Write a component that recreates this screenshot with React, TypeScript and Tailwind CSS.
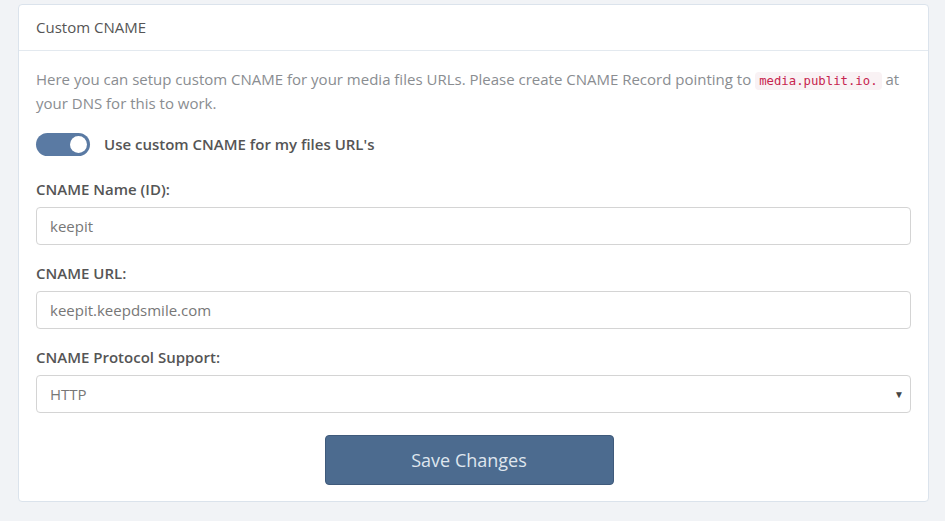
import { useState } from "react"

export default function App() {
  const [on, setOn] = useState(true)

  return (
    <div className="min-h-[521px] bg-[#f1f3f6] px-[18px] pt-[4px] pb-[18px] font-['Open_Sans',sans-serif] text-[15px]">
      <div className="w-[911px] rounded-[4px] border border-[#dbe3ec] bg-white">
        <div className="flex h-[46px] items-center border-b border-[#e3e9ef] px-[17px] text-[15px] text-[#555]">
          Custom CNAME
        </div>
        <div className="px-[17px] pt-[16px] pb-[16px]">
          <p className="h-[48px] leading-[24px] text-[#8a8d91]">
            Here you can setup custom CNAME for your media files URLs. Please create CNAME Record pointing to{" "}
            <code className="rounded-[4px] bg-[#f9f2f4] px-[4px] py-[2px] font-['DejaVu_Sans_Mono',monospace] text-[12.3px] leading-none text-[#c7254e]">
              media.publit.io.
            </code>{" "}
            at your DNS for this to work.
          </p>

          <label className="mt-[18px] flex h-[23px] cursor-pointer items-center gap-[14px]">
            <button
              type="button"
              onClick={() => setOn(!on)}
              className={`relative h-[23px] w-[54px] rounded-full ${on ? "bg-[#5a7aa3]" : "bg-[#ccc]"}`}
            >
              <span
                className={`absolute top-[3px] h-[17px] w-[17px] rounded-full bg-white ${on ? "left-[34px]" : "left-[3px]"}`}
              />
            </button>
            <span className="font-semibold leading-[23px] text-[#555]">Use custom CNAME for my files URL's</span>
          </label>

          <div className="mt-[23px]">
            <div className="mb-[8px] font-semibold leading-[20px] text-[#555]">CNAME Name (ID):</div>
            <input
              defaultValue="keepit"
              className="block h-[38px] w-full rounded-[4px] border border-[#d4d4d4] px-[13px] text-[#777] outline-none"
            />
          </div>

          <div className="mt-[18px]">
            <div className="mb-[8px] font-semibold leading-[20px] text-[#555]">CNAME URL:</div>
            <input
              defaultValue="keepit.keepdsmile.com"
              className="block h-[38px] w-full rounded-[4px] border border-[#d4d4d4] px-[13px] text-[#777] outline-none"
            />
          </div>

          <div className="mt-[18px]">
            <div className="mb-[8px] font-semibold leading-[20px] text-[#555]">CNAME Protocol Support:</div>
            <div className="relative">
              <select className="block h-[38px] w-full appearance-none rounded-[4px] border border-[#d4d4d4] bg-white px-[13px] text-[#777] outline-none">
                <option>HTTP</option>
                <option>HTTPS</option>
              </select>
              <span className="pointer-events-none absolute right-[7px] top-[12px] text-[10px] leading-[14px] text-[#444]">▼</span>
            </div>
          </div>

          <div className="mt-[22px] flex justify-center pr-[9px]">
            <button
              type="button"
              className="block h-[50px] w-[289px] rounded-[4px] border border-[#3f5a7b] bg-[#4c6b8f] text-[18px] text-[#dfe6ee]"
            >
              Save Changes
            </button>
          </div>
        </div>
      </div>
    </div>
  )
}
